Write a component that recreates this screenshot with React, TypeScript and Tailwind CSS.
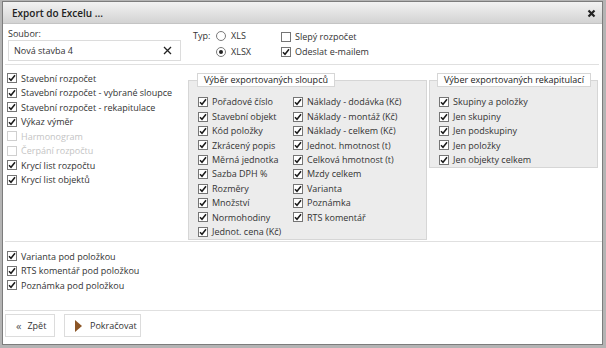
import React from "react";

const Check = ({ checked, disabled }: { checked?: boolean; disabled?: boolean }) => (
  <span
    className={`inline-flex items-center justify-center w-[10px] h-[10px] shrink-0 border bg-white ${
      disabled ? "border-[#cfcfcf]" : "border-[#757575]"
    }`}
  >
    {checked && (
      <svg width="8" height="8" viewBox="0 0 8 8">
        <path d="M1 4.2 L3 6.3 L7 1.2" fill="none" stroke="#1a1a1a" strokeWidth="1.5" />
      </svg>
    )}
  </span>
);

const Radio = ({ checked }: { checked?: boolean }) => (
  <span className="inline-flex items-center justify-center w-[10px] h-[10px] shrink-0 rounded-full border border-[#7a7a7a] bg-white">
    {checked && <span className="w-[4px] h-[4px] rounded-full bg-[#222]" />}
  </span>
);

const Row = ({
  label,
  checked = true,
  disabled,
  h = "h-[14.5px]",
}: {
  label: string;
  checked?: boolean;
  disabled?: boolean;
  h?: string;
}) => (
  <div className={`flex items-center gap-[4px] ${h}`}>
    <Check checked={checked} disabled={disabled} />
    <span className={`whitespace-nowrap ${disabled ? "text-[#c4c4c4]" : "text-[#333]"}`}>{label}</span>
  </div>
);

const App = () => {
  const reports = [
    { label: "Stavební rozpočet", checked: true },
    { label: "Stavební rozpočet - vybrané sloupce", checked: true },
    { label: "Stavební rozpočet - rekapitulace", checked: true },
    { label: "Výkaz výměr", checked: true },
    { label: "Harmonogram", checked: false, disabled: true },
    { label: "Čerpání rozpočtu", checked: false, disabled: true },
    { label: "Krycí list rozpočtu", checked: true },
    { label: "Krycí list objektů", checked: true },
  ];

  const colsLeft = [
    "Pořadové číslo",
    "Stavební objekt",
    "Kód položky",
    "Zkrácený popis",
    "Měrná jednotka",
    "Sazba DPH %",
    "Rozměry",
    "Množství",
    "Normohodiny",
    "Jednot. cena (Kč)",
  ];

  const colsRight = [
    "Náklady - dodávka (Kč)",
    "Náklady - montáž (Kč)",
    "Náklady - celkem (Kč)",
    "Jednot. hmotnost (t)",
    "Celková hmotnost (t)",
    "Mzdy celkem",
    "Varianta",
    "Poznámka",
    "RTS komentář",
  ];

  const recaps = ["Skupiny a položky", "Jen skupiny", "Jen podskupiny", "Jen položky", "Jen objekty celkem"];

  return (
    <div className="w-[606px] h-[348px] bg-[#b4b4b4] pl-[2px] pr-[3px] pt-[1px] pb-[3px] font-['Open_Sans',sans-serif] text-[9px] text-[#333]">
      <div className="h-full flex flex-col bg-white border border-[#7c7c7c]">
        {/* Title bar */}
        <div className="h-[22px] shrink-0 flex items-center justify-between pl-[9px] pr-[6px] pt-[1px] bg-gradient-to-b from-[#f2f2f2] to-[#d3d3d3] border-b border-[#c4c4c4]">
          <span className="text-[10px] font-semibold text-[#222]">Export do Excelu ...</span>
          <svg width="9" height="9" viewBox="0 0 9 9">
            <path d="M1.5 1.5 L7.5 7.5 M7.5 1.5 L1.5 7.5" stroke="#222" strokeWidth="2.2" />
          </svg>
        </div>

        {/* Top: file + type */}
        <div className="h-[41px] shrink-0 flex ml-[2px] mr-[3px] pl-[3px] pt-[3px] border-b border-[#e0e0e0]">
          <div className="w-[173px] flex flex-col">
            <span className="h-[13px] leading-[13px]">Soubor:</span>
            <div className="h-[21px] flex items-center justify-between border border-[#dcdcdc] pl-[5px] pr-[8px]">
              <span className="text-[#333]">Nová stavba 4</span>
              <svg width="9" height="9" viewBox="0 0 9 9">
                <path d="M1 1 L8 8 M8 1 L1 8" stroke="#222" strokeWidth="1.3" />
              </svg>
            </div>
          </div>
          <div className="ml-[12px] w-[23px] h-[16px] mt-[1px] flex items-center">Typ:</div>
          <div className="w-[65px] flex flex-col pt-[1px]">
            <div className="h-[16px] flex items-center gap-[5px]">
              <Radio />
              <span>XLS</span>
            </div>
            <div className="h-[16px] flex items-center gap-[5px]">
              <Radio checked />
              <span>XLSX</span>
            </div>
          </div>
          <div className="flex flex-col pt-[2px]">
            <Row label="Slepý rozpočet" checked={false} h="h-[15px]" />
            <Row label="Odeslat e-mailem" h="h-[15px]" />
          </div>
        </div>

        {/* Middle: reports + columns */}
        <div className="h-[177px] shrink-0 flex items-start ml-[2px] pl-[2px] border-b border-[#e0e0e0]">
          <div className="w-[181px] pt-[6px] flex flex-col">
            {reports.map((r) => (
              <Row key={r.label} label={r.label} checked={r.checked} disabled={r.disabled} />
            ))}
          </div>

          <fieldset className="mt-[8px] w-[239px] bg-[#ececec] border border-[#d6d6d6] p-0">
            <legend className="ml-[8px] px-[6px] h-[14px] leading-[12px] bg-white border border-[#d6d6d6] text-[#222]">
              Výběr exportovaných sloupců
            </legend>
            <div className="flex pl-[9px] pt-[8px]">
              <div className="w-[95px] flex flex-col">
                {colsLeft.map((c) => (
                  <Row key={c} label={c} h="h-[14.4px]" />
                ))}
              </div>
              <div className="flex flex-col">
                {colsRight.map((c) => (
                  <Row key={c} label={c} h="h-[14.4px]" />
                ))}
              </div>
            </div>
          </fieldset>

          <fieldset className="mt-[8px] ml-[2px] w-[169px] bg-[#ececec] border border-[#d6d6d6] p-0">
            <legend className="ml-[7px] px-[6px] h-[14px] leading-[12px] bg-white border border-[#d6d6d6] text-[#222]">
              Výber exportovaných rekapitulací
            </legend>
            <div className="flex flex-col pl-[9px] pt-[8px]">
              {recaps.map((c) => (
                <Row key={c} label={c} h="h-[14.4px]" />
              ))}
            </div>
          </fieldset>
        </div>

        {/* Bottom options */}
        <div className="h-[69px] shrink-0 flex flex-col ml-[2px] pl-[2px] pt-[7px] border-b border-[#e0e0e0]">
          <Row label="Varianta pod položkou" />
          <Row label="RTS komentář pod položkou" />
          <Row label="Poznámka pod položkou" />
        </div>

        {/* Buttons */}
        <div className="flex gap-[9px] pl-[2px] pt-[3px]">
          <button className="w-[50px] h-[23px] flex items-center gap-[6px] pl-[10px] border border-[#dcdcdc] bg-white text-[#333]">
            <span className="text-[11px] leading-none text-[#555]">«</span>
            <span>Zpět</span>
          </button>
          <button className="w-[77px] h-[23px] flex items-center gap-[8px] pl-[10px] border border-[#dcdcdc] bg-white text-[#333]">
            <svg width="7" height="12" viewBox="0 0 7 12">
              <path d="M0 0 L7 6 L0 12 Z" fill="#8c5626" />
            </svg>
            <span>Pokračovat</span>
          </button>
        </div>
      </div>
    </div>
  );
};

export default App;
